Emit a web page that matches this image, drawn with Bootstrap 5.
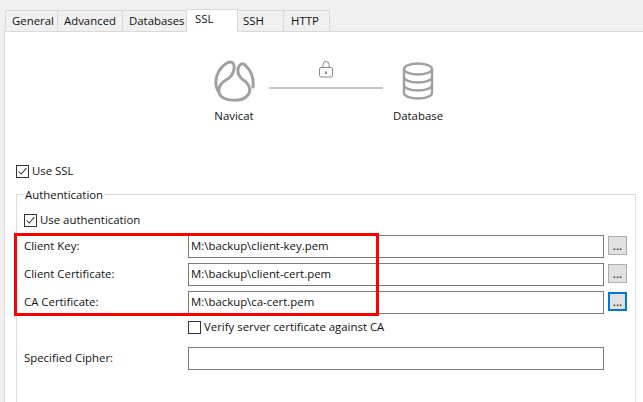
<!DOCTYPE html>
<html lang="en"><head><meta charset="utf-8"><title>SSL</title>
<link href="https://cdn.jsdelivr.net/npm/bootstrap@5.3.0/dist/css/bootstrap.min.css" rel="stylesheet">
<style>
html,body{height:402px;overflow:hidden}
body{background:#f0f0f0;font-family:"Open Sans","Noto Sans",sans-serif;font-size:11.4px;color:#111;position:relative;padding:9px 0 0 4px}
.tabbar{height:22px;align-items:flex-end;padding-left:1px}
.tabitem{height:21px;padding:2px 0 0 6px;background:#f0f0f0;border:1px solid #d9d9d9;border-bottom:0;border-left:0;line-height:16px}
.tabitem:first-child{border-left:1px solid #d9d9d9}
.tabitem.on{height:23px;background:#fff;padding:1px 0 0 8px;margin-bottom:-1px;position:relative;z-index:1}
.w1{width:53px}.w2{width:65px}.w3{width:64px}.w4{width:51px}.w5{width:46px;padding-left:5px}.w6{width:46px;padding-left:7px}
.panel{background:#fff;border:1px solid #d9d9d9;border-right:0;height:372px;padding:0 6px 0 11px}
.diagram{padding:26px 0 0 183px;height:131px}
.endp{width:70px;text-align:center}
.endp svg{display:block;margin:0 auto}
.endp span{display:block;line-height:16px}
.lab1{margin-top:6px}
.lab2{margin-top:8px}
.db{margin-top:4px !important}
.link-col{width:114px;text-align:center}
.wire{height:2px;background:#c6c6c6;margin-top:9px}
.lock{display:block;margin:3px auto 0}
.ck{width:13px;height:13px;border:1px solid #333;background:#fff;flex:none;display:block}
.ckrow{line-height:16px;gap:3px}
.grp{border:1px solid #dcdcdc;border-bottom:0;height:210px;width:620px;margin-top:15px;padding:0 0 0 7px;position:relative}
.grp-title{position:absolute;top:-8px;left:7px;background:#fff;padding:0 1px;line-height:16px}
.authrow{height:16px;margin:17px 0 7px 0}
.frow{height:28px;align-items:flex-start}
.flabel{width:164px;padding-top:3px;line-height:16px}
.tinput{width:416px;height:23px;border:1px solid #7a7a7a;padding:0 2px;line-height:20px;background:#fff;flex:none}
.dots{width:19px;height:19px;margin:1px 0 0 4px;background:#e1e1e1;border:1px solid #adadad;line-height:13px;text-align:center;padding:0;font-size:12px;color:#111;flex:none;border-radius:0}
.dots.act{border:2px solid #0078d7;line-height:11px}
.redbox{position:absolute;left:14px;top:233px;width:365px;height:83px;border:3px solid #f00;pointer-events:none}
</style></head><body>
<div class="d-flex tabbar">
<div class="tabitem w1">General</div><div class="tabitem w2">Advanced</div><div class="tabitem w3">Databases</div><div class="tabitem w4 on">SSL</div><div class="tabitem w5">SSH</div><div class="tabitem w6">HTTP</div>
</div>
<div class="panel">
<div class="d-flex diagram">
<div class="endp">
<svg width="42" height="44" viewBox="5 3 42 44" fill="none" stroke="#a0a0a0" stroke-width="3" stroke-linecap="round" stroke-linejoin="round"><path d="M10 36C5 27 9 14 19 8C24 5 27 9 26 14C25 20 22 23 18 25C12 28 9 35 12 40C16 46 32 47 38 42C44 37 42 31 38 27C33 24 29 20 30 14C31 9 35 7 38 11C43 16 46 24 45 32"/></svg>
<span class="lab1">Navicat</span></div>
<div class="link-col">
<svg class="lock" width="16" height="17" viewBox="0 0 16 17" fill="none" stroke="#8a8a8a"><rect x="1.5" y="6.5" width="13" height="9.5" rx="1.5"/><path d="M5 6.5V3.5a3 3 0 0 1 6 0v3"/><path d="M8 10.5v2.5" stroke="#555" stroke-width="1.4"/></svg>
<div class="wire"></div></div>
<div class="endp">
<svg class="db" width="32" height="38" viewBox="0 0 32 38" fill="none" stroke="#a0a0a0" stroke-width="2.4"><ellipse cx="16" cy="7" rx="14" ry="5.5"/><path d="M2 7V31C2 34 8 36.5 16 36.5S30 34 30 31V7"/><path d="M2 15C2 18 8 20.5 16 20.5S30 18 30 15"/><path d="M2 23C2 26 8 28.5 16 28.5S30 26 30 23"/></svg>
<span class="lab2">Database</span></div>
</div>
<div class="d-flex align-items-center ckrow">
<svg class="ck" viewBox="0 0 13 13" fill="none" stroke="#333" stroke-width="1.2"><path d="M2 6.5l3 3 6-7"/></svg><span>Use SSL</span></div>
<div class="grp">
<div class="grp-title">Authentication</div>
<div class="d-flex align-items-center ckrow authrow"><svg class="ck" viewBox="0 0 13 13" fill="none" stroke="#333" stroke-width="1.2"><path d="M2 6.5l3 3 6-7"/></svg><span>Use authentication</span></div>
<div class="d-flex frow"><div class="flabel">Client Key:</div><div class="tinput">M:\backup\client-key.pem</div><button class="dots">...</button></div>
<div class="d-flex frow"><div class="flabel">Client Certificate:</div><div class="tinput">M:\backup\client-cert.pem</div><button class="dots">...</button></div>
<div class="d-flex frow"><div class="flabel">CA Certificate:</div><div class="tinput">M:\backup\ca-cert.pem</div><button class="dots act">...</button></div>
<div class="d-flex frow"><div class="flabel"></div><div class="d-flex align-items-center ckrow"><span class="ck"></span><span>Verify server certificate against CA</span></div></div>
<div class="d-flex frow"><div class="flabel">Specified Cipher:</div><div class="tinput"></div></div>
</div>
</div>
<div class="redbox"></div>
<script src="https://cdn.jsdelivr.net/npm/bootstrap@5.3.0/dist/js/bootstrap.bundle.min.js"></script>
</body></html>
